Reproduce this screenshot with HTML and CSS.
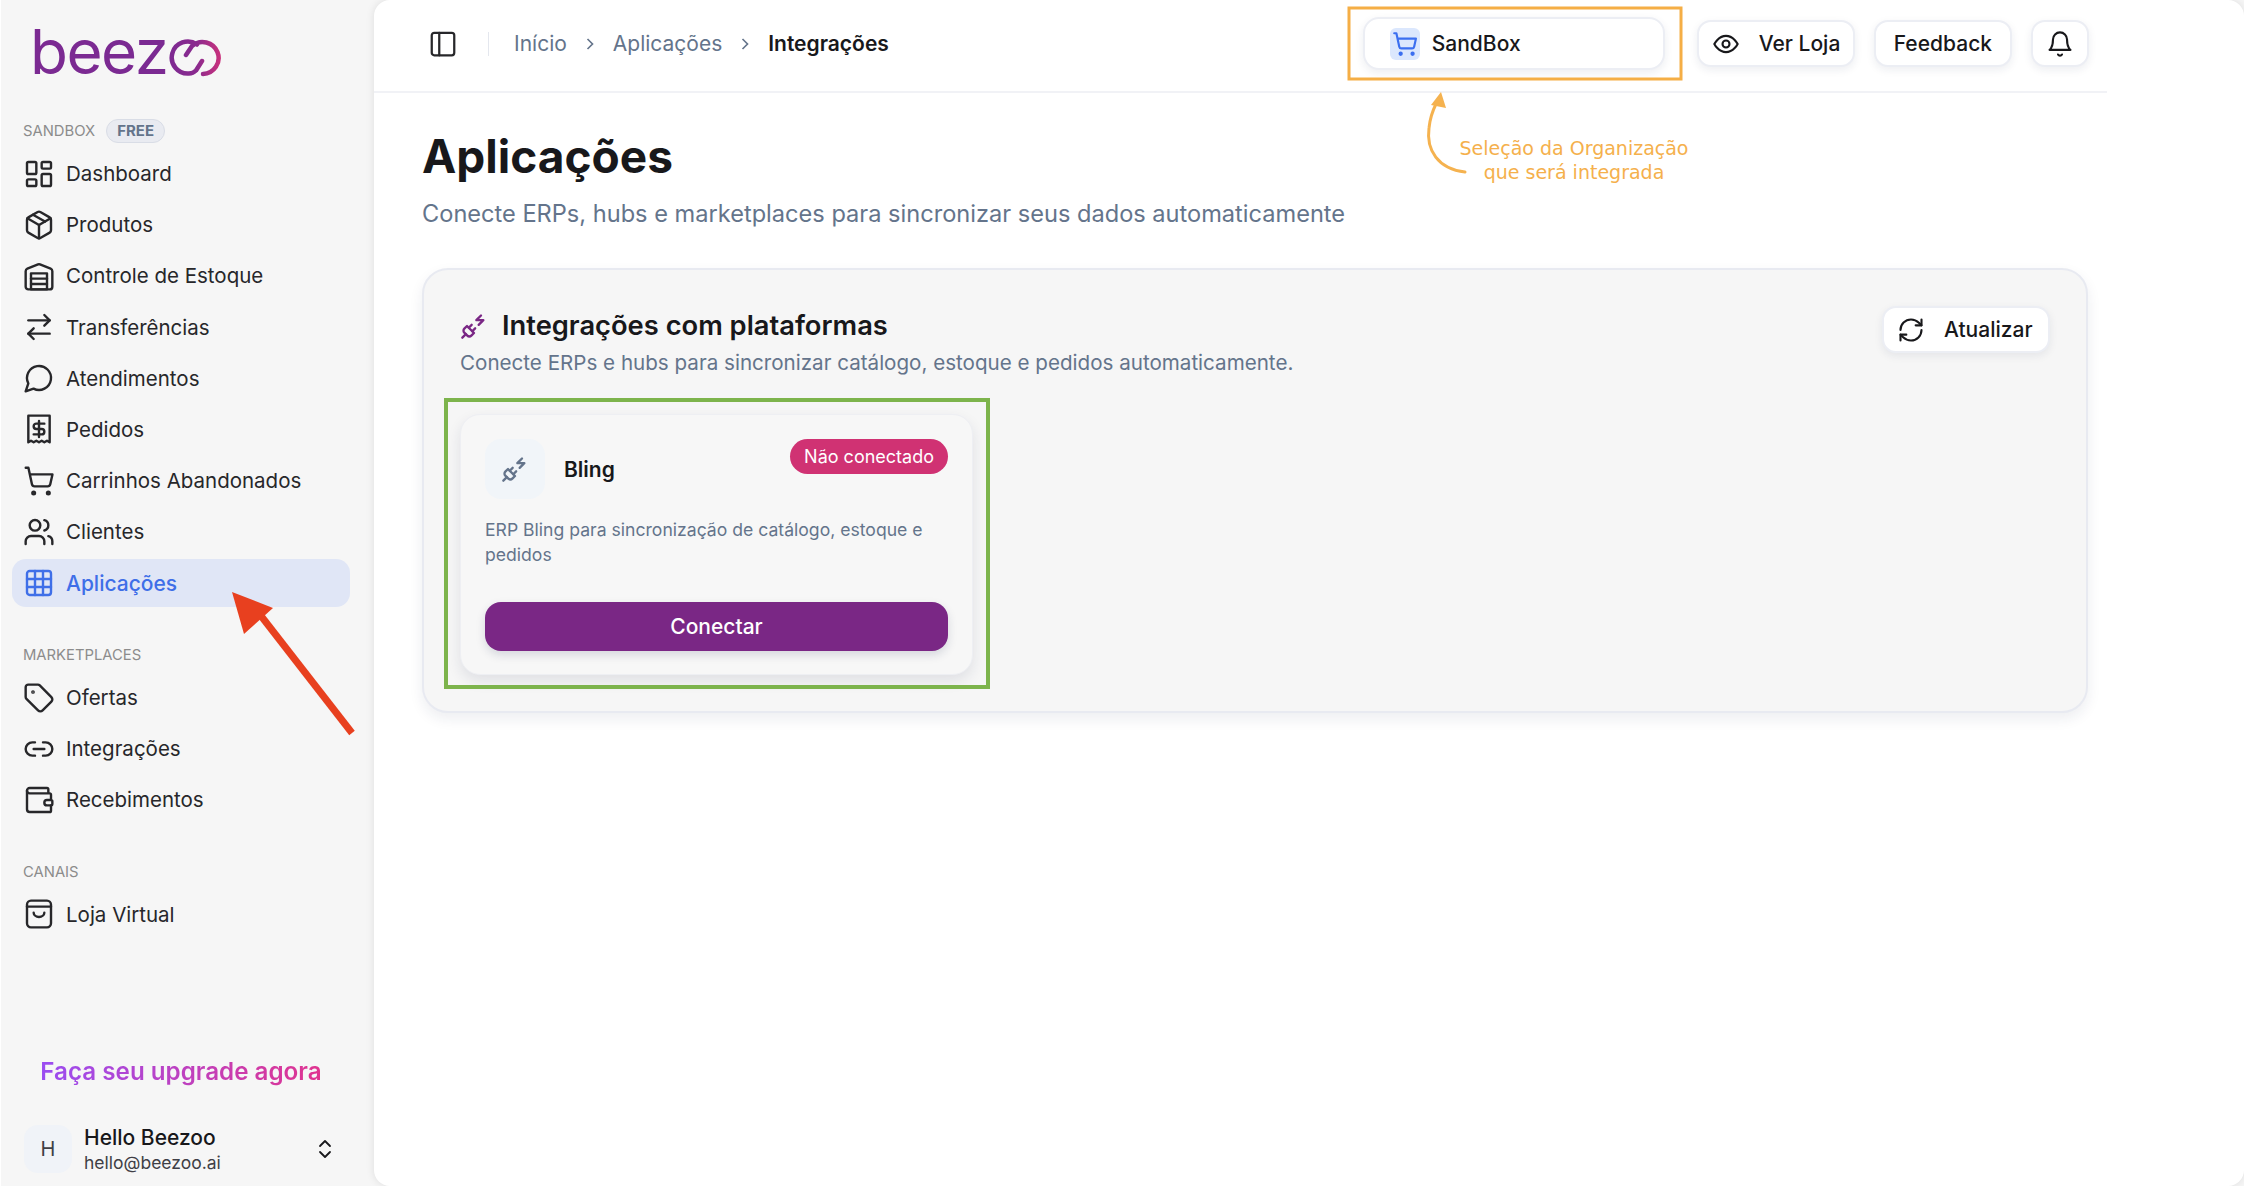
FILE: index.html
```html
<!DOCTYPE html>
<html lang="pt-BR">
<head>
    <meta charset="UTF-8">
    <meta name="viewport" content="width=device-width, initial-scale=1.0">
    <title>Aplicações - Integrações</title>
    <link rel="stylesheet" href="styles.css">
</head>
<body>
    <div class="app">
        <aside class="sidebar">
            <div class="logo">
                <span class="logo-text">beez</span>
                <svg class="logo-oo" viewBox="0 0 58 38" fill="none" stroke="url(#logo-grad)" stroke-width="4.5" stroke-linecap="round">
                    <defs>
                        <linearGradient id="logo-grad" x1="0" y1="0" x2="58" y2="0" gradientUnits="userSpaceOnUse">
                            <stop offset="0" stop-color="#7b2a92"/>
                            <stop offset="0.55" stop-color="#8a2a8e"/>
                            <stop offset="1" stop-color="#d0327a"/>
                        </linearGradient>
                    </defs>
                    <path d="M32 5.5A16 16 0 1 0 24 34.5C27 34.5 29 33.5 31 31.5L37 22"/>
                    <path d="M21 16L27 7A16 16 0 1 1 38 35"/>
                </svg>
            </div>

            <div class="nav-label">SANDBOX <span class="badge-free">FREE</span></div>
            <nav class="nav">
                <a class="nav-item"><svg class="icon" viewBox="0 0 24 24"><rect x="3" y="3" width="7" height="9" rx="1"/><rect x="14" y="3" width="7" height="5" rx="1"/><rect x="14" y="12" width="7" height="9" rx="1"/><rect x="3" y="16" width="7" height="5" rx="1"/></svg>Dashboard</a>
                <a class="nav-item"><svg class="icon" viewBox="0 0 24 24"><path d="M11 21.73a2 2 0 0 0 2 0l7-4A2 2 0 0 0 21 16V8a2 2 0 0 0-1-1.73l-7-4a2 2 0 0 0-2 0l-7 4A2 2 0 0 0 3 8v8a2 2 0 0 0 1 1.73z"/><path d="M12 22V12"/><path d="M3.29 7 12 12l8.71-5"/><path d="m7.5 4.27 9 5.15"/></svg>Produtos</a>
                <a class="nav-item"><svg class="icon" viewBox="0 0 24 24"><path d="M22 8.35V20a2 2 0 0 1-2 2H4a2 2 0 0 1-2-2V8.35A2 2 0 0 1 3.26 6.5l8-3.2a2 2 0 0 1 1.48 0l8 3.2A2 2 0 0 1 22 8.35Z"/><path d="M6 18h12"/><path d="M6 14h12"/><rect x="6" y="10" width="12" height="12"/></svg>Controle de Estoque</a>
                <a class="nav-item"><svg class="icon" viewBox="0 0 24 24"><path d="m16 3 4 4-4 4"/><path d="M20 7H4"/><path d="m8 21-4-4 4-4"/><path d="M4 17h16"/></svg>Transferências</a>
                <a class="nav-item"><svg class="icon" viewBox="0 0 24 24"><path d="M7.9 20A9 9 0 1 0 4 16.1L2 22Z"/></svg>Atendimentos</a>
                <a class="nav-item"><svg class="icon" viewBox="0 0 24 24"><path d="M4 2h16v20l-2-1.2-2 1.2-2-1.2-2 1.2-2-1.2-2 1.2-2-1.2-2 1.2z"/><path d="M16 8h-6a2 2 0 1 0 0 4h4a2 2 0 1 1 0 4H8"/><path d="M12 18V6"/></svg>Pedidos</a>
                <a class="nav-item"><svg class="icon" viewBox="0 0 24 24"><circle cx="8" cy="21" r="1"/><circle cx="19" cy="21" r="1"/><path d="M2.05 2.05h2l2.66 12.42a2 2 0 0 0 2 1.58h9.78a2 2 0 0 0 1.95-1.57l1.65-7.43H5.12"/></svg>Carrinhos Abandonados</a>
                <a class="nav-item"><svg class="icon" viewBox="0 0 24 24"><path d="M16 21v-2a4 4 0 0 0-4-4H6a4 4 0 0 0-4 4v2"/><circle cx="9" cy="7" r="4"/><path d="M22 21v-2a4 4 0 0 0-3-3.87"/><path d="M16 3.13a4 4 0 0 1 0 7.75"/></svg>Clientes</a>
                <a class="nav-item active"><svg class="icon" viewBox="0 0 24 24"><rect x="3" y="3" width="18" height="18" rx="2"/><path d="M3 9h18"/><path d="M3 15h18"/><path d="M9 3v18"/><path d="M15 3v18"/></svg>Aplicações</a>
            </nav>

            <div class="nav-label spaced">MARKETPLACES</div>
            <nav class="nav">
                <a class="nav-item"><svg class="icon" viewBox="0 0 24 24"><path d="M12.586 2.586A2 2 0 0 0 11.172 2H4a2 2 0 0 0-2 2v7.172a2 2 0 0 0 .586 1.414l8.704 8.704a2.426 2.426 0 0 0 3.42 0l6.58-6.58a2.426 2.426 0 0 0 0-3.42z"/><circle cx="7.5" cy="7.5" r=".5"/></svg>Ofertas</a>
                <a class="nav-item"><svg class="icon" viewBox="0 0 24 24"><path d="M9 17H7A5 5 0 0 1 7 7h2"/><path d="M15 7h2a5 5 0 1 1 0 10h-2"/><path d="M8 12h8"/></svg>Integrações</a>
                <a class="nav-item"><svg class="icon" viewBox="0 0 24 24"><path d="M19 7V4a1 1 0 0 0-1-1H5a2 2 0 0 0 0 4h15a1 1 0 0 1 1 1v4h-3a2 2 0 0 0 0 4h3a1 1 0 0 0 1-1v-2a1 1 0 0 0-1-1"/><path d="M3 5v14a2 2 0 0 0 2 2h15a1 1 0 0 0 1-1v-4"/></svg>Recebimentos</a>
            </nav>

            <div class="nav-label spaced">CANAIS</div>
            <nav class="nav">
                <a class="nav-item"><svg class="icon" viewBox="0 0 24 24"><rect x="3" y="2" width="18" height="20" rx="3"/><path d="M3 6.5h18"/><path d="M8 11a4 3.2 0 0 0 8 0"/></svg>Loja Virtual</a>
            </nav>

            <div class="sidebar-bottom">
                <a class="upgrade"><span>Faça seu upgrade agora</span></a>
                <div class="user">
                    <div class="avatar">H</div>
                    <div class="user-info">
                        <div class="user-name">Hello Beezoo</div>
                        <div class="user-mail">hello@beezoo.ai</div>
                    </div>
                    <svg class="icon user-chevron" viewBox="0 0 24 24"><path d="m7 15 5 5 5-5"/><path d="m7 9 5-5 5 5"/></svg>
                </div>
            </div>
        </aside>

        <main class="content">
            <div class="content-inner">
                <header class="topbar">
                    <svg class="icon toggle" viewBox="0 0 24 24"><rect x="3" y="3" width="18" height="18" rx="2"/><path d="M9 3v18"/></svg>
                    <div class="divider"></div>
                    <div class="breadcrumb">
                        <span>Início</span>
                        <svg class="crumb-sep" viewBox="0 0 24 24"><path d="m9 18 6-6-6-6"/></svg>
                        <span>Aplicações</span>
                        <svg class="crumb-sep" viewBox="0 0 24 24"><path d="m9 18 6-6-6-6"/></svg>
                        <span class="current">Integrações</span>
                    </div>
                    <div class="topbar-right">
                        <button class="btn org-select">
                            <span class="org-icon"><svg viewBox="0 0 24 24"><circle cx="8" cy="21" r="1"/><circle cx="19" cy="21" r="1"/><path d="M2.05 2.05h2l2.66 12.42a2 2 0 0 0 2 1.58h9.78a2 2 0 0 0 1.95-1.57l1.65-7.43H5.12"/></svg></span>
                            SandBox
                        </button>
                        <button class="btn btn-loja"><svg class="icon" viewBox="0 0 24 24"><path d="M2 12s3.5-7 10-7 10 7 10 7-3.5 7-10 7-10-7-10-7z"/><circle cx="12" cy="12" r="3"/></svg>Ver Loja</button>
                        <button class="btn">Feedback</button>
                        <button class="btn btn-bell"><svg class="icon" viewBox="0 0 24 24"><path d="M6 8a6 6 0 0 1 12 0c0 7 3 9 3 9H3s3-2 3-9"/><path d="M10.3 21a1.94 1.94 0 0 0 3.4 0"/></svg></button>
                    </div>
                </header>

                <section class="page">
                    <h1>Aplicações</h1>
                    <p class="page-sub">Conecte ERPs, hubs e marketplaces para sincronizar seus dados automaticamente</p>

                    <div class="panel">
                        <div class="panel-head">
                            <div>
                                <h2><svg class="plug" viewBox="0 0 24 24"><path d="M6.3 20.3a2.4 2.4 0 0 0 3.4 0L12 18l-6-6-2.3 2.3a2.4 2.4 0 0 0 0 3.4Z"/><path d="m2 22 3-3"/><path d="M7.5 13.5 10 11"/><path d="M10.5 16.5 13 14"/><path d="m18 3-4 4h6l-4 4"/></svg>Integrações com plataformas</h2>
                                <p>Conecte ERPs e hubs para sincronizar catálogo, estoque e pedidos automaticamente.</p>
                            </div>
                            <button class="btn btn-refresh"><svg class="icon" viewBox="0 0 24 24"><path d="M3 12a9 9 0 0 1 9-9 9.75 9.75 0 0 1 6.74 2.74L21 8"/><path d="M21 3v5h-5"/><path d="M21 12a9 9 0 0 1-9 9 9.75 9.75 0 0 1-6.74-2.74L3 16"/><path d="M8 16H3v5"/></svg>Atualizar</button>
                        </div>

                        <div class="card">
                            <div class="card-head">
                                <div class="card-icon"><svg viewBox="0 0 24 24"><path d="M6.3 20.3a2.4 2.4 0 0 0 3.4 0L12 18l-6-6-2.3 2.3a2.4 2.4 0 0 0 0 3.4Z"/><path d="m2 22 3-3"/><path d="M7.5 13.5 10 11"/><path d="M10.5 16.5 13 14"/><path d="m18 3-4 4h6l-4 4"/></svg></div>
                                <div class="card-name">Bling</div>
                                <span class="status">Não conectado</span>
                            </div>
                            <p class="card-desc">ERP Bling para sincronização de catálogo, estoque e pedidos</p>
                            <button class="connect">Conectar</button>
                        </div>
                    </div>
                </section>
            </div>
        </main>

        <!-- marcacoes feitas por cima do print -->
        <svg class="marks" viewBox="0 0 2244 1186" fill="none">
            <rect x="1349" y="8" width="332" height="71" stroke="#f5ae45" stroke-width="3"/>
            <rect x="446" y="400" width="542" height="287" stroke="#7db44c" stroke-width="4"/>
            <path d="M1465 172C1438 169 1426 150 1429 128C1430 118 1433 110 1436 104" stroke="#f5b24f" stroke-width="3" stroke-linecap="round"/>
            <path d="M1441 92L1446 108L1431 105Z" fill="#f5b24f"/>
            <path d="M352 733L258 612" stroke="#e8401f" stroke-width="7"/>
            <path d="M232 592L273 608L244 634Z" fill="#e8401f"/>
        </svg>
        <div class="note">Seleção da Organização<br>que será integrada</div>
    </div>
</body>
</html>
```

FILE: styles.css
```css
* {
    box-sizing: border-box;
}

body {
    margin: 0;
    font-family: Inter, "Liberation Sans", sans-serif;
    color: #18181b;
    background-color: #fff;
}

.app {
    position: relative;
    display: flex;
    height: 1186px;
    overflow: hidden;
    background-color: #f6f6f6;
    border-left: 1px solid #fff;
}

.icon {
    width: 28px;
    height: 28px;
    flex-shrink: 0;
    fill: none;
    stroke: currentColor;
    stroke-width: 1.8;
    stroke-linecap: round;
    stroke-linejoin: round;
}

/* sidebar */
.sidebar {
    width: 373px;
    flex-shrink: 0;
    display: flex;
    flex-direction: column;
    padding: 0 24px 0 11px;
}

.logo {
    display: flex;
    align-items: flex-end;
    height: 78px;
    margin-bottom: 41px;
    padding-left: 18px;
}

.logo-text {
    font-size: 62px;
    line-height: 70px;
    letter-spacing: -1.5px;
    color: #7b2a92;
    margin-bottom: -9px;
}

.logo-oo {
    width: 58px;
    height: 38px;
    margin-bottom: 1px;
    margin-left: -3px;
}

.nav-label {
    display: flex;
    align-items: center;
    height: 24px;
    padding-left: 11px;
    margin-bottom: 6px;
    font-size: 14.8px;
    color: #8c8c8c;
}

.nav-label.spaced {
    margin-top: 36.5px;
}

.badge-free {
    margin-left: 11px;
    padding: 0 10px;
    line-height: 22px;
    font-size: 15px;
    font-weight: 700;
    color: #64748b;
    background-color: #e9ebf1;
    border: 1px solid #d9dde6;
    border-radius: 12px;
}

.nav {
    display: flex;
    flex-direction: column;
    gap: 3.2px;
}

.nav-item {
    display: flex;
    align-items: center;
    gap: 11px;
    height: 48px;
    padding: 1px 11px 0;
    font-size: 20.5px;
    color: #27272a;
    border-radius: 14px;
}

.nav-item .icon {
    width: 32px;
    height: 32px;
}

.nav-item.active {
    color: #3f6fe8;
    font-size: 21px;
    font-weight: 500;
    background-color: #e0e6f6;
}

.sidebar-bottom {
    margin-top: auto;
    padding-bottom: 11px;
}

.upgrade {
    display: block;
    text-align: center;
    font-size: 24.2px;
    font-weight: 600;
    line-height: 32px;
    margin-bottom: 35px;
}

.upgrade span {
    background: linear-gradient(90deg, #9a4df2, #e0348f);
    -webkit-background-clip: text;
    background-clip: text;
    color: transparent;
}

.user {
    display: flex;
    align-items: center;
    gap: 12px;
    padding-left: 12px;
}

.avatar {
    width: 48px;
    height: 48px;
    display: flex;
    align-items: center;
    justify-content: center;
    font-size: 20px;
    color: #3f3f46;
    background-color: #f0f3f8;
    border-radius: 14px;
}

.user-info {
    flex: 1;
    padding-top: 2px;
}

.user-name {
    font-size: 21px;
    font-weight: 500;
    line-height: 25px;
}

.user-mail {
    font-size: 17.5px;
    line-height: 25px;
    color: #3f3f46;
}

.user-chevron {
    width: 24px;
    height: 24px;
    margin-right: 13px;
}

/* conteudo */
.content {
    flex: 1;
    background-color: #fff;
    border-radius: 16px;
    box-shadow: 0 0 8px rgba(0, 0, 0, 0.1);
}

.content-inner {
    width: 1733px;
}

.topbar {
    display: flex;
    align-items: center;
    height: 93px;
    padding: 0 18px 4px 54px;
    border-bottom: 2px solid #f1f2f6;
}

.toggle {
    width: 30px;
    height: 30px;
    color: #27272a;
}

.divider {
    width: 1px;
    height: 24px;
    margin: 0 25px 0 30px;
    background-color: #e4e7ee;
}

.breadcrumb {
    display: flex;
    align-items: center;
    gap: 13px;
    font-size: 21px;
    color: #64748b;
}

.breadcrumb .current {
    font-weight: 600;
    color: #18181b;
}

.crumb-sep {
    width: 20px;
    height: 20px;
    fill: none;
    stroke: #64748b;
    stroke-width: 2;
}

.topbar-right {
    display: flex;
    align-items: center;
    gap: 19px;
    margin-left: auto;
}

.btn {
    display: flex;
    align-items: center;
    height: 47px;
    padding: 0 18px;
    font-family: inherit;
    font-size: 21px;
    font-weight: 500;
    white-space: nowrap;
    color: #18181b;
    background-color: #fff;
    border: 2px solid #eceef4;
    border-radius: 14px;
    box-shadow: 0 3px 8px rgba(30, 41, 80, 0.08);
}

.org-select {
    width: 302px;
    height: 53px;
    margin-right: 13px;
    padding: 0 24px 0 25px;
    gap: 12px;
    border-radius: 16px;
}

.org-icon {
    display: flex;
    align-items: center;
    justify-content: center;
    width: 30px;
    height: 32px;
    background-color: #dbe7fd;
    border-radius: 6px;
}

.org-icon svg {
    width: 26px;
    height: 26px;
    fill: none;
    stroke: #3b6ff0;
    stroke-width: 2;
    stroke-linecap: round;
    stroke-linejoin: round;
}

.btn-loja {
    gap: 19px;
    width: 158px;
    padding: 0 10px 0 13px;
}

.btn-bell {
    width: 58px;
    padding: 0;
    justify-content: center;
}

.page {
    padding: 35px 19px 0 48px;
}

h1 {
    margin: 0;
    font-size: 46px;
    line-height: 56px;
    font-weight: 700;
}

.page-sub {
    margin: 14px 0 38px;
    font-size: 23.6px;
    line-height: 32px;
    color: #64748b;
}

.panel {
    height: 445px;
    padding: 38px 36px 0 36px;
    background-color: #f6f6f6;
    border: 2px solid #e8eaf1;
    border-radius: 26px;
    box-shadow: 0 6px 14px rgba(30, 41, 80, 0.08);
}

.panel-head {
    display: flex;
    justify-content: space-between;
    align-items: flex-start;
}

h2 {
    display: flex;
    align-items: center;
    gap: 14px;
    margin: 0;
    font-size: 27.3px;
    line-height: 36px;
    font-weight: 600;
}

.plug {
    width: 28px;
    height: 28px;
    fill: none;
    stroke: #7a2785;
    stroke-width: 2;
    stroke-linecap: round;
    stroke-linejoin: round;
}

.panel-head p {
    margin: 5px 0 0;
    font-size: 20.6px;
    line-height: 28px;
    color: #64748b;
}

.btn-refresh {
    gap: 19px;
    width: 168px;
    margin-top: -2px;
    padding: 0 9px 0 13px;
}

.card {
    width: 513px;
    height: 261px;
    margin-top: 37px;
    padding: 24px;
    background-color: #f7f7f7;
    border: 1px solid #eeeff3;
    border-radius: 20px;
    box-shadow: 0 6px 14px rgba(30, 41, 80, 0.1);
}

.card-head {
    display: flex;
    align-items: flex-start;
}

.card-icon {
    display: flex;
    align-items: center;
    justify-content: center;
    width: 60px;
    height: 60px;
    background-color: #f1f5f9;
    border-radius: 16px;
}

.card-icon svg {
    width: 28px;
    height: 28px;
    fill: none;
    stroke: #64748b;
    stroke-width: 2;
    stroke-linecap: round;
    stroke-linejoin: round;
}

.card-name {
    margin-left: 19px;
    padding-top: 1px;
    font-size: 21px;
    font-weight: 600;
    line-height: 60px;
}

.status {
    margin-left: auto;
    padding: 0 14px;
    font-size: 18px;
    line-height: 35px;
    color: #fff;
    background-color: #d03273;
    border-radius: 18px;
}

.card-desc {
    margin: 17px 0 35px;
    font-size: 17.6px;
    line-height: 25px;
    color: #64748b;
}

.connect {
    display: block;
    width: 100%;
    height: 49px;
    font-family: inherit;
    font-size: 21px;
    font-weight: 500;
    color: #fff;
    background-color: #7a2785;
    border: none;
    border-radius: 16px;
    box-shadow: 0 4px 10px rgba(30, 41, 80, 0.15);
}

/* anotacoes */
.marks {
    position: absolute;
    top: 0;
    left: -1px;
    width: 2244px;
    height: 1186px;
    pointer-events: none;
}

.note {
    position: absolute;
    top: 136px;
    left: 1448px;
    width: 250px;
    text-align: center;
    font-family: "DejaVu Sans", sans-serif;
    font-size: 19px;
    line-height: 24px;
    color: #f5b04c;
}
```
